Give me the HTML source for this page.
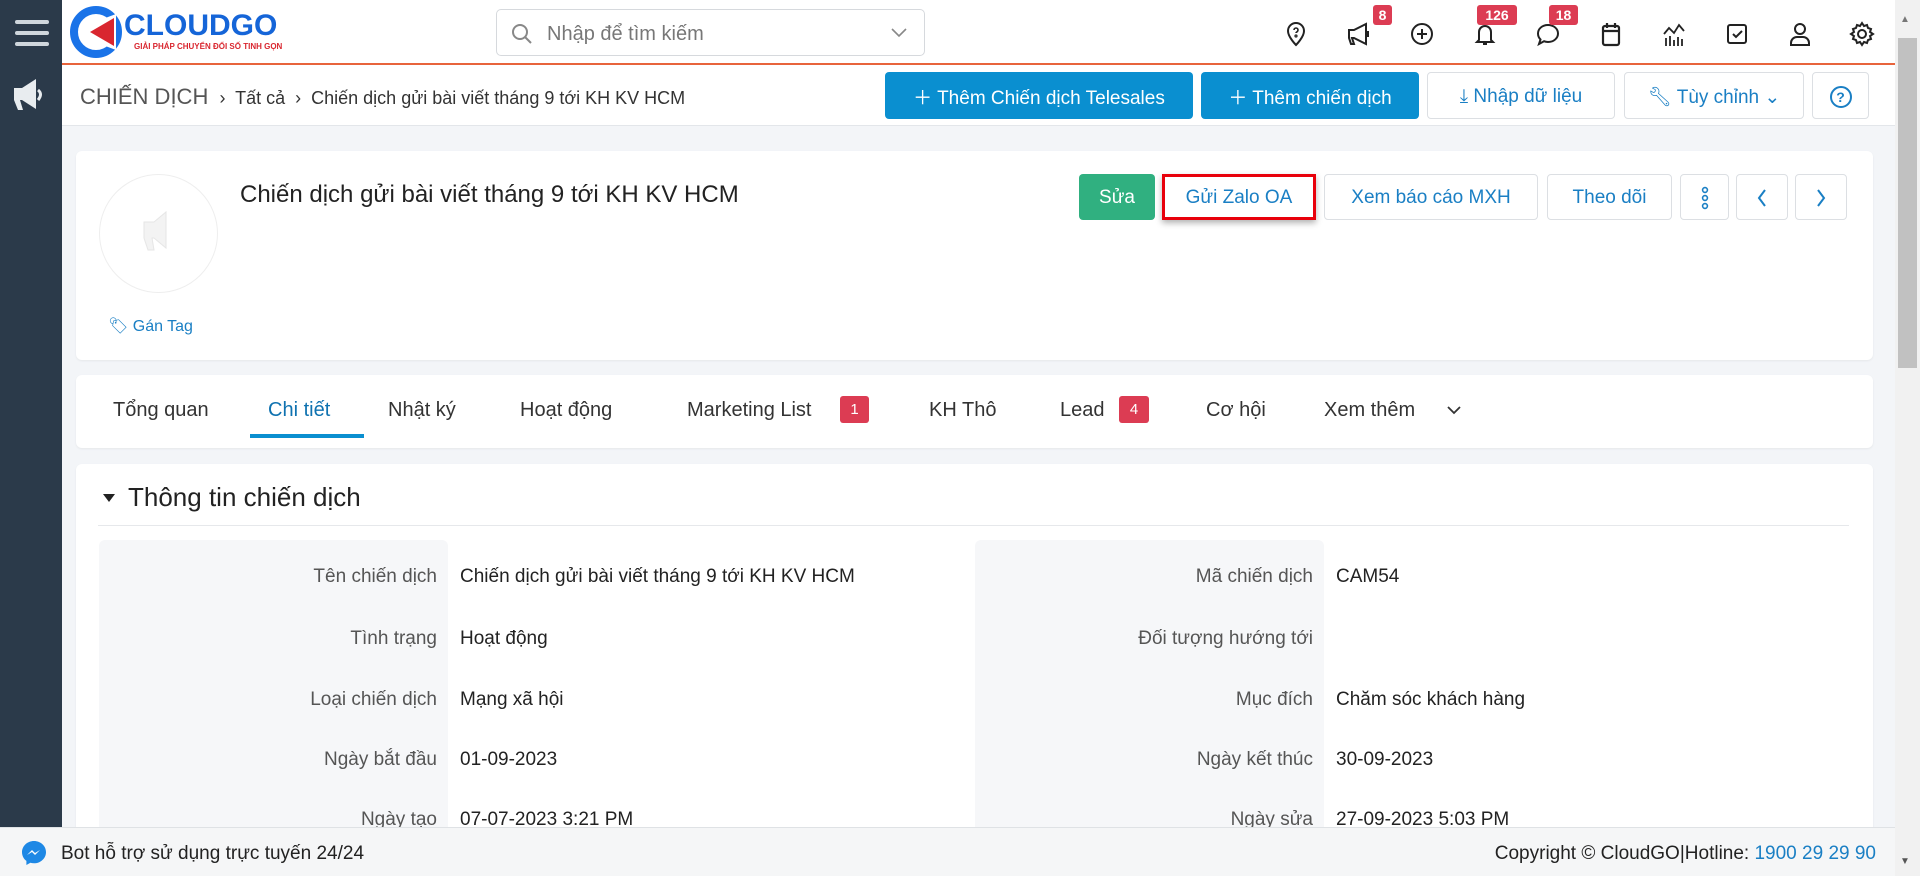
<!DOCTYPE html>
<html style="overflow:hidden;height:876px"><head><meta charset="utf-8">
<style>
*{box-sizing:border-box;margin:0;padding:0}
body{width:1920px;height:876px;overflow:hidden;position:relative;background:#f3f5f8;font-family:"Liberation Sans",sans-serif;color:#222}
.a{position:absolute}
.side{left:0;top:0;width:62px;height:876px;background:#2b3a4a}
.hdr{left:62px;top:0;width:1833px;height:65px;background:#fff;border-bottom:2px solid #e8643c}
.topline{left:0;top:0;width:1920px;height:3px;background:#c8c8c8}
.crumb{left:62px;top:65px;width:1833px;height:61px;background:#fff;border-bottom:1px solid #e3e6ea}
.btn{position:absolute;border-radius:4px;display:flex;align-items:center;justify-content:center;font-size:19px;white-space:nowrap;padding-top:2px}
.bp{background:#0a8fd0;color:#fff}
.bo{background:#fff;border:1px solid #dcdfe3;color:#1a7fc4}
.card{position:absolute;background:#fff;border-radius:6px;box-shadow:0 1px 2px rgba(0,0,0,.06)}
.tab{position:absolute;top:399px;font-size:20px;color:#333}
.badge{position:absolute;background:#dc3c53;color:#fff;font-size:14px;border-radius:3px;text-align:center}
.lbl{position:absolute;font-size:19px;color:#555;text-align:right}
.val{position:absolute;font-size:19px;color:#222}
.ic{position:absolute;top:21px;width:26px;height:26px}
.scroll{left:1895px;top:0;width:25px;height:876px;background:#f1f1f1}
</style></head><body>
<div class="a topline"></div>
<div class="a side"></div>
<div class="a" style="left:15px;top:20px;width:34px;height:4px;background:#cfd6dc;border-radius:2px"></div>
<div class="a" style="left:15px;top:31px;width:34px;height:4px;background:#cfd6dc;border-radius:2px"></div>
<div class="a" style="left:15px;top:42px;width:34px;height:4px;background:#cfd6dc;border-radius:2px"></div>
<svg class="a" style="left:12px;top:78px" width="40" height="36" viewBox="0 0 40 36"><path d="M2 10h8l14-9v30L10 22H8l3 10H6L2 22z" fill="#e8ecef"/><path d="M26 12q5 4 0 10" stroke="#e8ecef" stroke-width="3" fill="none"/></svg>
<div class="a hdr"></div>
<svg class="a" style="left:70px;top:6px" width="52" height="52" viewBox="0 0 52 52"><circle cx="26" cy="26" r="22" fill="none" stroke="#1a73e8" stroke-width="8"/><path d="M30 14 L46 8 L46 44 L30 38 L22 26 Z" fill="#fff"/><path d="M20 26 L44 12 L44 40 Z" fill="#d9262f"/></svg>
<div class="a" style="left:124px;top:9px;font-size:30px;font-weight:bold;color:#1565d8">CLOUDGO</div>
<div class="a" style="left:134px;top:42px;font-size:8px;font-weight:bold;color:#d9262f">GIẢI PHÁP CHUYỂN ĐỔI SỐ TINH GỌN</div>
<div class="a" style="left:496px;top:9px;width:429px;height:47px;border:1px solid #d6d9dd;border-radius:5px;background:#fff"></div>
<svg class="a" style="left:510px;top:22px" width="24" height="24" viewBox="0 0 24 24"><circle cx="10" cy="10" r="7" stroke="#888" stroke-width="2" fill="none"/><path d="M15 15l6 6" stroke="#888" stroke-width="2"/></svg>
<div class="a" style="left:547px;top:23px;font-size:20px;color:#777">Nhập để tìm kiếm</div>
<svg class="a" style="left:890px;top:27px" width="18" height="12" viewBox="0 0 18 12"><path d="M2 2l7 7 7-7" stroke="#888" stroke-width="1.6" fill="none"/></svg>
<svg class="ic" style="left:1283px" viewBox="0 0 26 26" fill="none" stroke="#222" stroke-width="2"><path d="M13 24s-8-8-8-14a8 8 0 0116 0c0 6-8 14-8 14z"/><path d="M11 9a2 2 0 114 0c0 2-2 2-2 3" stroke-width="1.6"/><circle cx="13" cy="15" r=".6"/></svg>
<svg class="ic" style="left:1346px" viewBox="0 0 26 26" fill="none" stroke="#222" stroke-width="2"><path d="M3 9h5l12-6v20L8 17H6l2 6H5L3 17z"/><path d="M22 10v6"/></svg>
<svg class="ic" style="left:1409px" viewBox="0 0 26 26" fill="none" stroke="#222" stroke-width="2"><circle cx="13" cy="13" r="10"/><path d="M13 8v10M8 13h10"/></svg>
<svg class="ic" style="left:1472px" viewBox="0 0 26 26" fill="none" stroke="#222" stroke-width="2"><path d="M7 19V11a6 6 0 0112 0v8l2 2H5z"/><path d="M11 23h4"/></svg>
<svg class="ic" style="left:1535px" viewBox="0 0 26 26" fill="none" stroke="#222" stroke-width="2"><path d="M13 4c6 0 10 4 10 8.5S19 21 13 21c-1.5 0-3-.3-4-.8L4 23l1.5-4.5C4 17 3 15 3 12.5 3 8 7 4 13 4z"/></svg>
<svg class="ic" style="left:1598px" viewBox="0 0 26 26" fill="none" stroke="#222" stroke-width="2.2"><rect x="5" y="5" width="16" height="19" rx="2"/><path d="M9 2v5M17 2v5M5 10h16"/></svg>
<svg class="ic" style="left:1661px" viewBox="0 0 26 26" fill="none" stroke="#222" stroke-width="1.8"><path d="M3 13l5-6 5 5 5-8 5 6M5 25v-8M9 25v-10M13 25v-6M17 25v-9M21 25v-7"/></svg>
<svg class="ic" style="left:1724px" viewBox="0 0 26 26" fill="none" stroke="#222" stroke-width="2"><rect x="4" y="4" width="18" height="18" rx="2"/><path d="M9 13l3 3 6-6"/></svg>
<svg class="ic" style="left:1787px" viewBox="0 0 26 26" fill="none" stroke="#222" stroke-width="2"><circle cx="13" cy="8" r="5"/><path d="M4 24v-2a6 6 0 016-6h6a6 6 0 016 6v2z"/></svg>
<svg class="ic" style="left:1849px" viewBox="0 0 26 26" fill="none" stroke="#222" stroke-width="2"><circle cx="13" cy="13" r="4"/><path d="M13 2l2 3 3-1 1 3 3 1-1 3 3 2-3 2 1 3-3 1-1 3-3-1-2 3-2-3-3 1-1-3-3-1 1-3-3-2 3-2-1-3 3-1 1-3 3 1z"/></svg>
<div class="badge" style="left:1373px;top:5px;width:19px;height:20px;line-height:20px;font-weight:bold">8</div>
<div class="badge" style="left:1477px;top:5px;width:40px;height:20px;line-height:20px;font-weight:bold">126</div>
<div class="badge" style="left:1549px;top:5px;width:29px;height:20px;line-height:20px;font-weight:bold">18</div>
<div class="a crumb"></div>
<div class="a" style="left:80px;top:84px;font-size:22px;color:#555">CHIẾN DỊCH <span style="font-size:18px;color:#333">&nbsp;›&nbsp; Tất cả &nbsp;›&nbsp; Chiến dịch gửi bài viết tháng 9 tới KH KV HCM</span></div>
<div class="btn bp" style="left:885px;top:72px;width:308px;height:47px">＋ Thêm Chiến dịch Telesales</div>
<div class="btn bp" style="left:1201px;top:72px;width:218px;height:47px">＋ Thêm chiến dịch</div>
<div class="btn bo" style="left:1427px;top:72px;width:188px;height:47px">⤓ Nhập dữ liệu</div>
<div class="btn bo" style="left:1624px;top:72px;width:180px;height:47px">🔧︎ Tùy chỉnh ⌄</div>
<div class="btn bo" style="left:1812px;top:72px;width:57px;height:47px"><span style="display:inline-block;width:22px;height:22px;border:2px solid #1a7fc4;border-radius:50%;font-size:14px;line-height:18px;text-align:center;font-weight:bold">?</span></div>
<div class="card" style="left:76px;top:151px;width:1797px;height:209px"></div>
<div class="a" style="left:99px;top:174px;width:119px;height:119px;border:1px solid #eee;border-radius:50%"></div>
<svg class="a" style="left:140px;top:208px" width="38" height="50" viewBox="0 0 38 50"><path d="M4 14h10l12-10v36L14 30h-2l2 12H8L4 30z" fill="#f3f3f3" stroke="#e6e6e6"/></svg>
<div class="a" style="left:108px;top:316px;font-size:16px;color:#1a7fc4">🏷︎ Gán Tag</div>
<div class="a" style="left:240px;top:181px;font-size:24px;color:#222">Chiến dịch gửi bài viết tháng 9 tới KH KV HCM</div>
<div class="btn" style="left:1079px;top:174px;width:76px;height:46px;background:#30b080;color:#fff">Sửa</div>
<div class="btn bo" style="left:1162px;top:174px;width:154px;height:46px;border:3px solid #e8000b;border-radius:0;box-shadow:0 3px 6px rgba(0,0,0,.3)">Gửi Zalo OA</div>
<div class="btn bo" style="left:1324px;top:174px;width:214px;height:46px">Xem báo cáo MXH</div>
<div class="btn bo" style="left:1547px;top:174px;width:125px;height:46px">Theo dõi</div>
<div class="btn bo" style="left:1680px;top:174px;width:49px;height:46px"><svg width="8" height="24" viewBox="0 0 8 24" fill="none" stroke="#1a7fc4" stroke-width="1.6"><circle cx="4" cy="4" r="2.4"/><circle cx="4" cy="12" r="2.4"/><circle cx="4" cy="20" r="2.4"/></svg></div>
<div class="btn bo" style="left:1736px;top:174px;width:52px;height:46px"><svg width="12" height="20" viewBox="0 0 12 20"><path d="M9 2L3 10l6 8" stroke="#1a7fc4" stroke-width="2" fill="none"/></svg></div>
<div class="btn bo" style="left:1795px;top:174px;width:52px;height:46px"><svg width="12" height="20" viewBox="0 0 12 20"><path d="M3 2l6 8-6 8" stroke="#1a7fc4" stroke-width="2" fill="none"/></svg></div>
<div class="card" style="left:76px;top:375px;width:1797px;height:73px"></div>
<div class="tab" style="left:113px">Tổng quan</div>
<div class="tab" style="left:268px;color:#0f72b0">Chi tiết</div>
<div class="a" style="left:250px;top:434px;width:114px;height:4px;background:#0a8fd0"></div>
<div class="tab" style="left:388px">Nhật ký</div>
<div class="tab" style="left:520px">Hoạt động</div>
<div class="tab" style="left:687px">Marketing List</div>
<div class="badge" style="left:840px;top:396px;width:29px;height:27px;line-height:27px;font-size:15px">1</div>
<div class="tab" style="left:929px">KH Thô</div>
<div class="tab" style="left:1060px">Lead</div>
<div class="badge" style="left:1119px;top:396px;width:30px;height:27px;line-height:27px;font-size:15px">4</div>
<div class="tab" style="left:1206px">Cơ hội</div>
<div class="tab" style="left:1324px">Xem thêm</div>
<svg class="a" style="left:1446px;top:405px" width="16" height="10" viewBox="0 0 16 10"><path d="M2 2l6 6 6-6" stroke="#333" stroke-width="1.8" fill="none"/></svg>
<div class="card" style="left:76px;top:464px;width:1797px;height:412px"></div>
<svg class="a" style="left:102px;top:493px" width="14" height="10" viewBox="0 0 14 10"><path d="M1 1h12L7 9z" fill="#222"/></svg>
<div class="a" style="left:128px;top:482px;font-size:26px;color:#222">Thông tin chiến dịch</div>
<div class="a" style="left:98px;top:525px;width:1751px;height:1px;background:#e6e8eb"></div>
<div class="a" style="left:99px;top:540px;width:349px;height:300px;background:#f6f7f9;border-radius:6px 6px 0 0"></div>
<div class="a" style="left:975px;top:540px;width:349px;height:300px;background:#f6f7f9;border-radius:6px 6px 0 0"></div>
<div class="lbl" style="right:1483px;top:566px">Tên chiến dịch</div>
<div class="val" style="left:460px;top:566px">Chiến dịch gửi bài viết tháng 9 tới KH KV HCM</div>
<div class="lbl" style="right:1483px;top:628px">Tình trạng</div>
<div class="val" style="left:460px;top:628px">Hoạt động</div>
<div class="lbl" style="right:1483px;top:689px">Loại chiến dịch</div>
<div class="val" style="left:460px;top:689px">Mạng xã hội</div>
<div class="lbl" style="right:1483px;top:749px">Ngày bắt đầu</div>
<div class="val" style="left:460px;top:749px">01-09-2023</div>
<div class="lbl" style="right:1483px;top:809px">Ngày tạo</div>
<div class="val" style="left:460px;top:809px">07-07-2023 3:21 PM</div>
<div class="lbl" style="right:607px;top:566px">Mã chiến dịch</div>
<div class="val" style="left:1336px;top:566px">CAM54</div>
<div class="lbl" style="right:607px;top:628px">Đối tượng hướng tới</div>
<div class="lbl" style="right:607px;top:689px">Mục đích</div>
<div class="val" style="left:1336px;top:689px">Chăm sóc khách hàng</div>
<div class="lbl" style="right:607px;top:749px">Ngày kết thúc</div>
<div class="val" style="left:1336px;top:749px">30-09-2023</div>
<div class="lbl" style="right:607px;top:809px">Ngày sửa</div>
<div class="val" style="left:1336px;top:809px">27-09-2023 5:03 PM</div>
<div class="a" style="left:0;top:827px;width:1895px;height:49px;background:#f5f6f7;border-top:1px solid #dfe2e5"></div>
<svg class="a" style="left:20px;top:839px" width="28" height="28" viewBox="0 0 28 28"><path d="M14 2C7.4 2 2 7 2 13.2c0 3.5 1.7 6.6 4.4 8.7V26l4-2.2c1.1.3 2.3.5 3.6.5 6.6 0 12-5 12-11.2S20.6 2 14 2z" fill="#1e88e5"/><path d="M7 16l5-5 3 3 5-3-5 5-3-3z" fill="#fff"/></svg>
<div class="a" style="left:61px;top:843px;font-size:19px;color:#222">Bot hỗ trợ sử dụng trực tuyến 24/24</div>
<div class="a" style="right:44px;top:843px;font-size:19px;color:#222">Copyright © CloudGO|Hotline: <span style="color:#1a7fc4">1900 29 29 90</span></div>
<div class="a scroll"></div>
<div class="a" style="left:1898px;top:38px;width:19px;height:330px;background:#c1c1c1"></div>
<div class="a" style="left:1900px;top:14px;font-size:10px;color:#777">▲</div>
<div class="a" style="left:1900px;top:856px;font-size:10px;color:#555">▼</div>
</body></html>
